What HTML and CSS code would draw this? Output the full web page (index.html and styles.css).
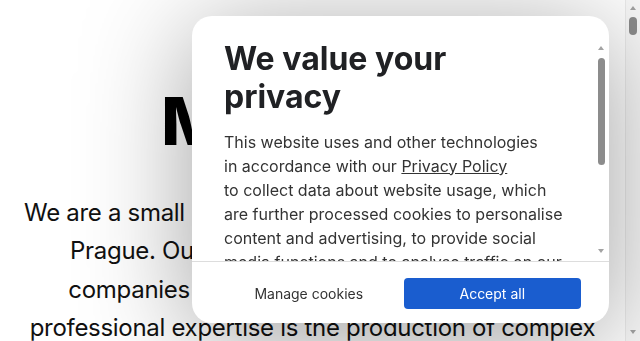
FILE: index.html
```html
<!DOCTYPE html>
<html lang="en">
<head>
<meta charset="utf-8">
<title>Mindlabs</title>
<link rel="stylesheet" href="styles.css">
</head>
<body>
<main class="page">
  <h1 class="hero-title">Mindlabs</h1>
  <p class="hero-text">We are a small software development company from<br>Prague. Our clients are mostly small and big<br>companies in all of Europe. The focus of our<br>professional expertise is the production of complex<br>web applications, portals and information systems.</p>
</main>

<div class="page-scrollbar" aria-hidden="true">
  <span class="arrow arrow-up"></span>
  <span class="page-thumb"></span>
  <span class="arrow arrow-down page-arrow-down"></span>
</div>

<div class="consent" role="dialog" aria-label="Cookie consent">
  <div class="consent-body">
    <h2 class="consent-title">We value your privacy</h2>
    <p class="consent-text">This website uses and other technologies<br>in accordance with our <a href="#" class="consent-link">Privacy Policy</a><br>to collect data about website usage, which are further processed cookies to personalise content and advertising, to provide social media functions and to analyse traffic on our website. Information about how you use our website is shared with our social media, advertising and analytics partners. By clicking “Accept all” you agree to the use of all cookies. You can change your settings at any time in “Manage cookies”.</p>
  </div>
  <div class="consent-scrollbar" aria-hidden="true">
    <span class="arrow arrow-up"></span>
    <span class="consent-thumb"></span>
    <span class="arrow arrow-down consent-arrow-down"></span>
  </div>
  <div class="consent-actions">
    <button class="btn btn-secondary" type="button">Manage cookies</button>
    <button class="btn btn-primary" type="button">Accept all</button>
  </div>
</div>
</body>
</html>
```
FILE: styles.css
```css
html, body {
  margin: 0;
  padding: 0;
  background: #ffffff;
  overflow: hidden;
}

body {
  font-family: Inter, "Liberation Sans", sans-serif;
  color: #111111;
}

.page {
  padding: 81px 39px 0 24px;
  text-align: center;
}

.hero-title {
  margin: 0;
  font-size: 66px;
  font-weight: 800;
  line-height: 80px;
  color: #000000;
}

.hero-text {
  margin: 33px 0 0;
  font-size: 24px;
  line-height: 38.4px;
  letter-spacing: -0.3px;
  color: #111111;
  white-space: nowrap;
}

/* fake page scrollbar */
.page-scrollbar {
  position: fixed;
  top: 0;
  right: 0;
  width: 15px;
  height: 100vh;
  background: #f9f9f9;
  border-left: 1px solid #ececec;
  box-sizing: border-box;
}

.arrow {
  position: absolute;
  left: 50%;
  width: 0;
  height: 0;
  margin-left: -3.5px;
  border-left: 3.5px solid transparent;
  border-right: 3.5px solid transparent;
}

.arrow-up {
  top: 6px;
  border-bottom: 4px solid #a3a3a3;
}

.arrow-down {
  border-top: 4px solid #a3a3a3;
}

.page-arrow-down {
  bottom: 7px;
}

.page-thumb {
  position: absolute;
  top: 17px;
  left: 3px;
  width: 8px;
  height: 18px;
  border-radius: 4px;
  background: #8c8c8c;
}

/* dialog */
.consent {
  position: fixed;
  top: 16px;
  right: 31px;
  bottom: 18px;
  width: 417px;
  display: flex;
  flex-direction: column;
  background: #ffffff;
  border-radius: 20px;
  box-shadow: 0 16px 110px rgba(0, 0, 0, 0.38);
  overflow: hidden;
}

.consent-body {
  flex: 1;
  min-height: 0;
  margin-top: 24px;
  padding: 0 41px 0 32px;
  overflow: hidden;
}

.consent-title {
  margin: 0;
  font-size: 32px;
  font-weight: 700;
  line-height: 38.4px;
  color: #202124;
}

.consent-text {
  margin: 13px 0 0;
  font-size: 16px;
  line-height: 24px;
  color: #333333;
}

.consent-link {
  color: #333333;
  text-decoration: underline;
}

.consent-scrollbar {
  position: absolute;
  top: 24px;
  right: 2px;
  width: 11px;
  height: 221px;
}

.consent-scrollbar .arrow-up {
  top: 6px;
}

.consent-arrow-down {
  top: 209px;
}

.consent-thumb {
  position: absolute;
  top: 18px;
  left: 2px;
  width: 7px;
  height: 107px;
  border-radius: 4px;
  background: #8c8c8c;
}

.consent-actions {
  display: grid;
  grid-template-columns: 1fr 1fr;
  gap: 6px;
  padding: 16px 28px 14px;
  border-top: 1px solid #dddddd;
}

.btn {
  height: 31px;
  border: 0;
  border-radius: 4px;
  font-family: Inter, "Liberation Sans", sans-serif;
  font-size: 14px;
  cursor: pointer;
}

.btn-secondary {
  background: transparent;
  color: #333333;
}

.btn-primary {
  background: #1a5dcf;
  color: #ffffff;
}
```
